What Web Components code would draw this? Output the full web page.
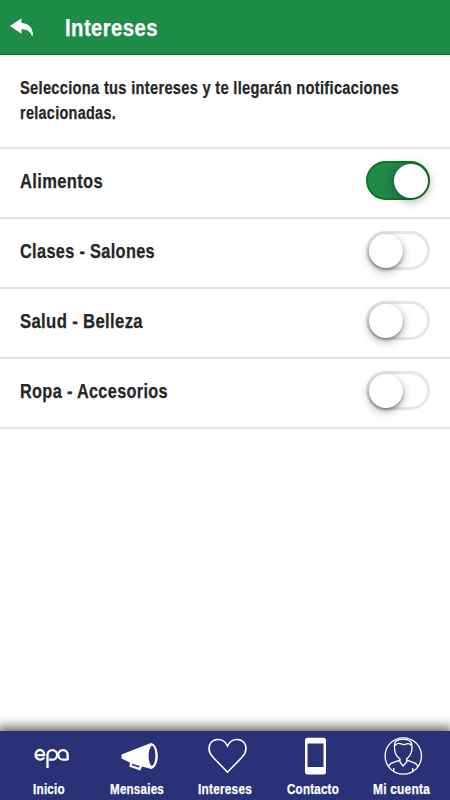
<!DOCTYPE html>
<html lang="es"><head><meta charset="utf-8"><title>Intereses</title>
<style>body{margin:0;background:#fff;overflow:hidden}</style></head><body>
<interests-app></interests-app>
<script>
// Text set in a condensed measure: its glyphs are scaled to the given width.
class FitText extends HTMLElement{
 constructor(){super();this.attachShadow({mode:'open'}).innerHTML=`<style>:host{display:block;white-space:nowrap;height:1.2em;line-height:1.2}span{display:inline-block;transform-origin:0 50%;letter-spacing:.02em;-webkit-text-stroke:.25px currentColor}</style><span><slot></slot></span>`}
 connectedCallback(){const w=+this.getAttribute('width');this.style.width=w+'px';const s=this.shadowRoot.querySelector('span');s.style.transform=`scaleX(${w/s.getBoundingClientRect().width})`}
}
class AppHeader extends HTMLElement{
 constructor(){super();this.attachShadow({mode:'open'}).innerHTML=`<style>:host{display:flex;align-items:center;box-sizing:border-box;height:55px;padding:1px 0 0 10px;background:#1f8b48;border-bottom:1px solid #087711;color:#fff;font-size:24.5px}svg{width:24px;height:20px;margin-right:31px}</style>
 <svg viewBox="0 0 24 20"><path fill="#fff" d="M0 8 11.5.2V5C18.5 5.2 23 9.5 23 17.5L21.8 17.8C20 13 17 11.3 11.5 11.2V15.8Z"/></svg><slot></slot>`}
}
class ToggleSwitch extends HTMLElement{
 constructor(){super();this.attachShadow({mode:'open'}).innerHTML=`<style>:host{display:flex;box-sizing:border-box;width:64px;height:39px;border:3px solid #e6e6e6;border-radius:20px;background:#fff}
 :host([on]){background:#208849;border:2px solid #087c1c;justify-content:flex-end}i{width:34px;height:34px;border-radius:50%;background:#fff;box-shadow:0 3px 10px rgba(0,0,0,.33),0 2px 3px rgba(0,0,0,.28);margin:-.5px 0 0 -.3px}:host([on]) i{box-shadow:0 2px 11px rgba(0,0,0,.42);margin:.5px 0 0}</style><i></i>`}
}
class InterestRow extends HTMLElement{
 constructor(){super();this.attachShadow({mode:'open'}).innerHTML=`<style>:host{display:flex;align-items:center;justify-content:space-between;box-sizing:border-box;height:70px;padding:0 20px 5px;border-bottom:2px solid #e3e3e3;color:#262626;font-size:20.5px}::slotted(fit-text){padding-top:1px}</style><slot></slot><slot name="toggle"></slot>`}
}
class NavItem extends HTMLElement{
 constructor(){super();this.attachShadow({mode:'open'}).innerHTML=`<style>:host{display:flex;flex-direction:column;align-items:center;width:88px;padding-top:5px;box-sizing:border-box}div{height:45px}::slotted(svg){display:block;width:40px;height:40px;overflow:visible}</style><div><slot name="icon"></slot></div><slot></slot>`}
}
class BottomNav extends HTMLElement{
 constructor(){super();this.attachShadow({mode:'open'}).innerHTML=`<style>:host{display:flex;box-sizing:border-box;height:69px;padding-left:5px;background:#293277;color:#fff;box-shadow:0 -1px 11px 3px rgba(0,0,0,.62);font-size:14.3px}</style><slot></slot>`}
}
class InterestsApp extends HTMLElement{
 constructor(){super();this.attachShadow({mode:'open'}).innerHTML=`<style>:host{display:flex;flex-direction:column;height:800px;width:450px;font-family:"Liberation Sans Narrow","Liberation Sans",sans-serif;font-weight:700;overflow:hidden}
 .intro{height:94px;box-sizing:border-box;padding:22.5px 20px 0;border-bottom:2px solid #e3e3e3;color:#262626;font-size:18px;display:flex;flex-direction:column;gap:4px}main{flex:1}</style>
 <app-header><fit-text width="93">Intereses</fit-text></app-header>
 <main><div class="intro"><fit-text width="379">Selecciona tus intereses y te llegarán notificaciones</fit-text><fit-text width="96">relacionadas.</fit-text></div>
 <interest-row><fit-text width="83">Alimentos</fit-text><toggle-switch slot="toggle" on></toggle-switch></interest-row>
 <interest-row><fit-text width="135">Clases - Salones</fit-text><toggle-switch slot="toggle"></toggle-switch></interest-row>
 <interest-row><fit-text width="123">Salud - Belleza</fit-text><toggle-switch slot="toggle"></toggle-switch></interest-row>
 <interest-row><fit-text width="148">Ropa - Accesorios</fit-text><toggle-switch slot="toggle"></toggle-switch></interest-row></main>
 <bottom-nav>
 <nav-item><svg slot="icon" viewBox="0 0 40 40" fill="none" stroke="#fff" stroke-width="2.3"><path d="M7 19.2H15.2C15.2 15.6 13 14 11 14C8.3 14 6.6 16.2 6.6 18.7C6.6 23.8 12.8 25 15.2 21.6M18.5 32V18.7A4.8 4.8 0 1 1 23.3 23.7H20M38.7 24V18.7A4.7 4.8 0 1 0 34 23.7H38.7"/></svg><fit-text width="32">Inicio</fit-text></nav-item>
 <nav-item><svg slot="icon" viewBox="0 0 40 40"><path fill="#fff" fill-rule="evenodd" d="M4.5 18.5 34 7C43 9 43 30 34.5 33L25 30.5 23.3 34.5 12.5 30.8 12.8 26.5 4.5 22.5ZM15 27.8 14.8 29.2 22 31.5 22.8 30ZM35 9.5C30.5 13 30.5 26 34.7 30C39.5 28 39.6 12 35 9.5Z"/></svg><fit-text width="54">Mensaies</fit-text></nav-item>
 <nav-item><svg slot="icon" viewBox="0 0 40 40"><path fill="none" stroke="#fff" stroke-width="1.6" d="M22.5 36.2L7.8 21C5.2 18.2 4 15.5 4 12.5C4 1.8 18 .5 22.5 9.8C27 .5 41 1.8 41 12.5C41 15.5 39.8 18.2 37.2 21Z"/></svg><fit-text width="54">Intereses</fit-text></nav-item>
 <nav-item><svg slot="icon" viewBox="0 0 40 40"><path fill="#fff" fill-rule="evenodd" d="M14.5 1.8H30.5Q33 1.8 33 4.3V36Q33 38.5 30.5 38.5H14.5Q12 38.5 12 36V4.3Q12 1.8 14.5 1.8ZM14.5 7.5V31H30.5V7.5Z"/></svg><fit-text width="52">Contacto</fit-text></nav-item>
 <nav-item><svg slot="icon" viewBox="0 0 40 40" fill="none" stroke="#fff" stroke-width="1.3"><circle cx="22.3" cy="20" r="18.2"/><path d="M13.6 8C13 17 15 20 19 23V26L22 30 25.7 26V23C30 19 31.6 16 30.8 8C30 4 26 3.3 22.3 3.3S14 4 13.6 8ZM14 9.5 16.5 7.5C19 6.5 21 9 24 8.5C26.5 8 28 6 30.5 9.5M19 24.2 10.5 27.2Q8 28.5 7.5 31M26 24.2 34 27.2Q36.5 28.5 37 31M12.7 32V36M31.7 32V36"/></svg><fit-text width="57">Mi cuenta</fit-text></nav-item>
 </bottom-nav>`}
}
customElements.define('fit-text',FitText);customElements.define('app-header',AppHeader);customElements.define('toggle-switch',ToggleSwitch);customElements.define('interest-row',InterestRow);customElements.define('nav-item',NavItem);customElements.define('bottom-nav',BottomNav);customElements.define('interests-app',InterestsApp);
</script></body></html>
